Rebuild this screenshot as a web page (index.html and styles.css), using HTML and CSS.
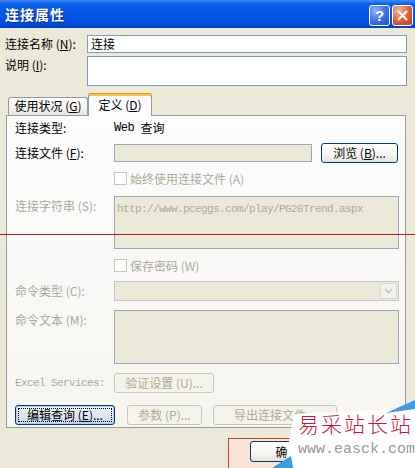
FILE: index.html
```html
<!DOCTYPE html>
<html>
<head>
<meta charset="utf-8">
<title>连接属性</title>
<link rel="stylesheet" href="styles.css">
</head>
<body>
<div class="titlebar">
  <span class="title">连接属性</span>
  <div class="tbtns">
    <span class="tbtn help">?</span>
    <span class="tbtn close"><svg width="11" height="11" viewBox="0 0 11 11"><path d="M1.5 1.5 L9.5 9.5 M9.5 1.5 L1.5 9.5" stroke="#fff" stroke-width="2" stroke-linecap="round"/></svg></span>
  </div>
</div>

<div class="top">
  <div class="frow">
    <span class="flabel">连接名称 (<u>N</u>):</span>
    <div class="input">连接</div>
  </div>
  <div class="frow">
    <span class="flabel">说明 (<u>I</u>):</span>
    <div class="input tall"></div>
  </div>
</div>

<div class="tabs">
  <div class="tab">使用状况 (<u>G</u>)</div>
  <div class="tab active">定义 (<u>D</u>)</div>
</div>

<div class="panel">
  <div class="row r1">
    <span class="lbl">连接类型:</span>
    <span class="mono big">Web</span><span class="gap6">查询</span>
  </div>
  <div class="row r2">
    <span class="lbl">连接文件 (<u>F</u>):</span>
    <div class="input ro w198"></div>
    <div class="btn browse">浏览 (<u>B</u>)...</div>
  </div>
  <div class="row r3">
    <span class="lbl"></span>
    <span class="cb"></span>
    <span class="dis-t cbl">始终使用连接文件 (A)</span>
  </div>
  <div class="row r4 top-al">
    <span class="lbl dis-t">连接字符串 (S):</span>
    <div class="input ro area53"><span class="mono dis-t">http://www.pceggs.com/play/PG28Trend.aspx</span></div>
  </div>
  <div class="row r5">
    <span class="lbl"></span>
    <span class="cb"></span>
    <span class="dis-t cbl">保存密码 (W)</span>
  </div>
  <div class="row r6">
    <span class="lbl dis-t">命令类型 (C):</span>
    <div class="sel">
      <span class="arrow"><svg width="9" height="6" viewBox="0 0 9 6"><path d="M1 1 L4.5 4.5 L8 1" fill="none" stroke="#c3c1b8" stroke-width="1.6"/></svg></span>
    </div>
  </div>
  <div class="row r7 top-al">
    <span class="lbl dis-t">命令文本 (M):</span>
    <div class="input ro area54"></div>
  </div>
  <div class="row r8">
    <span class="lbl dis-t mono">Excel Services:</span>
    <div class="btn dis w100">验证设置 (U)...</div>
  </div>
  <div class="row r9">
    <div class="btn focus w100"><span class="focusrect">编辑查询 (<u>E</u>)...</span></div>
    <div class="btn dis w75 ml12">参数 (P)...</div>
    <div class="btn dis w124 ml11">导出连接文件...</div>
  </div>
</div>

<div class="footer">
  <div class="okwrap">
    <div class="btn ok">确定</div>
  </div>
</div>

<div class="redline"></div>

<div class="wm">
  <svg class="wm-bg" width="145" height="73" viewBox="0 0 145 73">
    <polygon points="24,19 145,13 145,73 14,73" fill="#ffffff"/>
    <polygon points="116,18 145,5 145,14" fill="#3d9ce0"/>
    <polygon points="2,73 21,61 23,73" fill="#3d9ce0"/>
  </svg>
  <div class="wm-cn">易采站长站</div>
  <div class="wm-en">www.easck.com</div>
</div>
</body>
</html>
```

FILE: styles.css
```css
* { box-sizing: border-box; margin: 0; padding: 0; }
html, body { width: 415px; height: 468px; overflow: hidden; }
body {
  background: #ece9d8;
  font: 12px/14px "Noto Sans CJK SC", "Liberation Sans", sans-serif;
  color: #000;
  position: relative;
}
u { text-decoration: underline; text-underline-offset: 1px; }

.titlebar {
  height: 28px;
  background: linear-gradient(#3f8cf8 0%, #0b61ec 14%, #0457e6 45%, #0151dd 80%, #0042c6 100%);
  display: flex;
  align-items: center;
  justify-content: space-between;
  padding: 0 2px 0 5px;
}
.title {
  color: #fff;
  font-weight: bold;
  font-size: 14px;
  letter-spacing: 1px;
  text-shadow: 1px 1px 0 #0b2a8a;
}
.tbtns { display: flex; gap: 2px; margin-top: 2px; }
.tbtn {
  width: 21px; height: 21px;
  border: 1px solid #fff;
  border-radius: 3px;
  display: flex; align-items: center; justify-content: center;
  color: #fff;
  font: bold 15px/1 "Liberation Sans", sans-serif;
}
.help { background: radial-gradient(circle at 30% 25%, #8fb2ff 0%, #3a6fea 55%, #2452cc 100%); }
.close { background: radial-gradient(circle at 30% 25%, #f6b89c 0%, #dc5d34 55%, #c1401c 100%); }

.top { padding: 7px 0 0 5px; }
.frow { display: flex; }
.frow + .frow { margin-top: 3px; }
.flabel { width: 82px; flex: none; padding-top: 2px; }
.input {
  width: 320px; height: 18px;
  border: 1px solid #7f9db9;
  background: #fff;
  padding: 1px 3px;
  line-height: 14px;
}
.input.tall { height: 30px; }
.input.ro { background: #ece9d8; border-color: #97a8b9; }
.w198 { width: 198px; }
.area53 { width: 285px; height: 53px; padding: 3px 2px; }
.area54 { width: 285px; height: 54px; }

.tabs {
  display: flex;
  align-items: flex-end;
  height: 22px;
  margin-top: 7px;
  padding-left: 8px;
  position: relative;
  z-index: 1;
}
.tab {
  width: 80px; height: 18px;
  border: 1px solid #919b9c;
  border-bottom: none;
  border-radius: 3px 3px 0 0;
  background: linear-gradient(#ffffff, #f4f3ee 60%, #e8e6dd);
  text-align: center;
  line-height: 15px;
}
.tab.active {
  width: 64px; height: 23px;
  margin-bottom: -1px;
  border-top: 1px solid #e68b2c;
  background: #fcfcfe;
  box-shadow: inset 0 2px 0 #ffc83c;
  padding-top: 4px;
  line-height: 14px;
}

.panel {
  margin-left: 6px;
  width: 400px; height: 313px;
  border: 1px solid #919b9c;
  background: linear-gradient(#fcfcfd, #f6f5f0);
  padding: 5px 0 0 8px;
}
.row { display: flex; align-items: center; }
.row.top-al { align-items: flex-start; }
.top-al .lbl { padding-top: 3px; }
.lbl { width: 99px; flex: none; white-space: nowrap; }
.gap6 { margin-left: 6px; }
.r1 { height: 14px; }
.r2 { margin-top: 8px; height: 20px; }
.r3 { margin-top: 9px; height: 13px; }
.r4 { margin-top: 11px; }
.r5 { margin-top: 10px; height: 13px; }
.r6 { margin-top: 9px; height: 20px; }
.r7 { margin-top: 9px; }
.r8 { margin-top: 9px; height: 20px; }
.r9 { margin-top: 12px; height: 20px; }

.mono {
  font-family: "Liberation Mono", monospace;
  font-size: 11px;
  letter-spacing: -0.6px;
}
.mono.big { font-size: 12px; letter-spacing: -0.4px; }
.dis-t { color: #aca899; }

.cb {
  width: 13px; height: 13px;
  border: 1px solid #cac8bb;
  background: #fff;
  flex: none;
}
.cbl { margin-left: 3px; }

.sel {
  width: 285px; height: 20px;
  border: 1px solid #c4c8cc;
  background: #ece9d8;
  display: flex;
  justify-content: flex-end;
  padding: 1px;
}
.arrow {
  width: 17px; height: 16px;
  border: 1px solid #dbd9cf;
  border-radius: 2px;
  background: #f3f2ec;
  display: flex; align-items: center; justify-content: center;
}

.btn {
  height: 20px;
  border: 1px solid #003c74;
  border-radius: 3px;
  background: linear-gradient(#ffffff, #f5f4f0 65%, #e4e1d6);
  display: flex; align-items: center; justify-content: center;
  white-space: nowrap;
  flex: none;
}
.btn.dis { border-color: #c9c7ba; color: #aca899; background: #f5f4ea; }
.browse { width: 77px; margin-left: 9px; }
.w100 { width: 100px; }
.w75 { width: 75px; }
.w124 { width: 124px; }
.ml12 { margin-left: 12px; }
.ml11 { margin-left: 11px; }
.btn.focus {
  background: linear-gradient(#eef2fb, #dde4f2 60%, #c9d3e8);
  box-shadow: inset 0 0 0 1px #b9c9ef;
  padding: 2px;
}
.focusrect {
  flex: 1;
  align-self: stretch;
  border: 1px dotted #000;
  display: flex; align-items: center; justify-content: center;
}

.footer { display: flex; padding-left: 228px; margin-top: 10px; }
.okwrap {
  width: 120px; height: 40px;
  border: 1px solid #b04a34;
  background: #fbe3d6;
  padding: 2px 0 0 21px;
}
.ok { width: 75px; height: 21px; }

.redline {
  position: absolute;
  left: 0; top: 234px;
  width: 415px; height: 1px;
  background: #b21e1e;
}

.wm {
  position: absolute;
  left: 270px; top: 395px;
  width: 145px; height: 73px;
  overflow: hidden;
}
.wm-bg { position: absolute; left: 0; top: 0; }
.wm-cn {
  position: absolute;
  left: 28px; top: 16px;
  font-size: 21px;
  font-weight: 300;
  line-height: 24px;
  letter-spacing: 2px;
  color: #c8163c;
  white-space: nowrap;
}
.wm-en {
  position: absolute;
  left: 28px; top: 47px;
  font: 15px/16px "Liberation Mono", monospace;
  color: #9a9a9a;
  white-space: nowrap;
}
```
